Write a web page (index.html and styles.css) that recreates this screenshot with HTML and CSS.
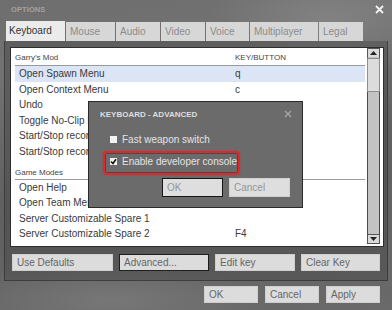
FILE: index.html
```html
<!DOCTYPE html>
<html>
<head>
	<meta http-equiv="Content-Type" content="text/html;charset=UTF-8">
	<title>Options</title>
	<link rel="stylesheet" href="styles.css">
</head>
<body>
	<div class="options">
		<div class="titlebar">
			<span class="title">OPTIONS</span>
			<svg class="close" width="9" height="9" viewBox="0 0 9 9"><path d="M1 1L8 8M8 1L1 8" stroke="#f2f2f2" stroke-width="1.8"/></svg>
		</div>
		<div class="tabs">
			<div class="tab active w-keyboard">Keyboard</div>
			<div class="tab w-mouse">Mouse</div>
			<div class="tab w-audio">Audio</div>
			<div class="tab w-video">Video</div>
			<div class="tab w-voice">Voice</div>
			<div class="tab w-multi">Multiplayer</div>
			<div class="tab w-legal">Legal</div>
		</div>
		<div class="sheet">
			<div class="listbox">
				<div class="list">
					<div class="section first"><span class="col-action">Garry's Mod</span><span class="col-key">KEY/BUTTON</span></div>
					<div class="row selected"><span class="col-action">Open Spawn Menu</span><span class="col-key">q</span></div>
					<div class="row"><span class="col-action">Open Context Menu</span><span class="col-key">c</span></div>
					<div class="row"><span class="col-action">Undo</span><span class="col-key"></span></div>
					<div class="row"><span class="col-action">Toggle No-Clip Mode</span><span class="col-key"></span></div>
					<div class="row"><span class="col-action">Start/Stop recording</span><span class="col-key"></span></div>
					<div class="row"><span class="col-action">Start/Stop recording</span><span class="col-key"></span></div>
					<div class="section"><span class="col-action">Game Modes</span><span class="col-key"></span></div>
					<div class="row"><span class="col-action">Open Help</span><span class="col-key"></span></div>
					<div class="row"><span class="col-action">Open Team Menu</span><span class="col-key"></span></div>
					<div class="row"><span class="col-action">Server Customizable Spare 1</span><span class="col-key"></span></div>
					<div class="row"><span class="col-action">Server Customizable Spare 2</span><span class="col-key">F4</span></div>
				</div>
				<div class="scrollbar">
					<div class="sb-btn"><svg width="7" height="4" viewBox="0 0 7 4"><polygon points="0,4 3.5,0 7,4" fill="#222"/></svg></div>
					<div class="sb-track"><div class="sb-thumb"></div></div>
					<div class="sb-btn"><svg width="7" height="4" viewBox="0 0 7 4"><polygon points="0,0 7,0 3.5,4" fill="#222"/></svg></div>
				</div>
			</div>
			<div class="actions">
				<div class="btn w-defaults">Use Defaults</div>
				<div class="btn focused w-advanced">Advanced...</div>
				<div class="btn w-edit">Edit key</div>
				<div class="btn w-clear">Clear Key</div>
			</div>
		</div>
		<div class="footer">
			<div class="btn w-small">OK</div>
			<div class="btn w-small">Cancel</div>
			<div class="btn w-small">Apply</div>
		</div>

		<!-- modal on top of the list -->
		<div class="dialog">
			<div class="dlg-title">
				<span>KEYBOARD - ADVANCED</span>
				<svg width="8" height="8" viewBox="0 0 8 8"><path d="M1 1L7 7M7 1L1 7" stroke="#a8a8a8" stroke-width="1.3"/></svg>
			</div>
			<div class="check"><span class="box"></span>Fast weapon switch</div>
			<div class="check"><span class="box"><svg width="7" height="7" viewBox="0 0 7 7"><polyline points="1,3.5 3,5.5 6,1.2" fill="none" stroke="#111" stroke-width="1.6"/></svg></span>Enable developer console</div>
			<div class="dlg-buttons">
				<div class="dlg-btn focused w-dlg">OK</div>
				<div class="dlg-btn w-dlg">Cancel</div>
			</div>
			<div class="marker"></div>
		</div>
	</div>
</body>
</html>
```

FILE: styles.css
```css
*{ margin: 0; padding: 0; box-sizing: border-box; }
body{ width: 392px; height: 310px; overflow: hidden; font-family: "Liberation Sans", Arial, sans-serif; }

.options{ position: relative; width: 392px; height: 310px;
	background:
		radial-gradient(ellipse 120px 60px at 330px 20px, rgba(150,150,150,.45), rgba(150,150,150,0)),
		radial-gradient(ellipse 160px 40px at 110px 300px, rgba(150,150,150,.35), rgba(150,150,150,0)),
		linear-gradient(170deg, #6e6e6e 0%, #727272 20%, #5f5f5f 55%, #6a6a6a 100%); }

.titlebar{ height: 21px; display: flex; align-items: center; justify-content: space-between; padding: 0 8px 2px 11px; }
.title{ font-size: 7.5px; font-weight: bold; color: #a2a2a2; letter-spacing: .1px; }

.tabs{ display: flex; gap: 1px; padding-left: 6px; height: 20px; align-items: flex-end; }
.tab{ height: 19px; background: #d7d7d7; color: #8c8c8c; font-size: 10px; line-height: 19px; padding-left: 4px; }
.tab.active{ height: 20px; background: #ebebeb; color: #333; padding-left: 3px; }
.w-keyboard{ width: 59px; } .w-mouse{ width: 49px; } .w-audio{ width: 44px; } .w-video{ width: 44px; }
.w-voice{ width: 43px; } .w-multi{ width: 68px; } .w-legal{ width: 44px; }

.sheet{ margin: 0 4px; height: 240px; border: 1px solid rgba(38,38,38,.55); border-top: none;
	background: rgba(72,72,72,.45); padding: 6px 3px 0 5px; }

.listbox{ display: flex; height: 200px; width: 374px; background: #fff; border: 1px solid #2e2e2e; }
.list{ width: 350px; margin-left: 4px; }
.section, .row{ display: grid; grid-template-columns: 220px 1fr; color: #3a3a3a; }
.section{ font-size: 8px; line-height: 12px; padding-top: 7px; border-bottom: 1px solid #9a9a9a; color: #444; }
.section.first{ padding-top: 4px; padding-bottom: 1px; }
.row{ font-size: 10px; height: 15.6px; line-height: 15.6px; }
.row .col-action{ padding-left: 4px; }
.row.selected{ background: #dce5f6; }

.scrollbar{ width: 13px; margin: 0 3px 2px 2px; display: flex; flex-direction: column; border: 1px solid #4a4a4a; }
.sb-btn{ height: 10px; background: #dadada; display: flex; align-items: center; justify-content: center; border: 1px solid #555; margin: -1px; }
.sb-track{ flex: 1; background: #c3c3c3; padding-top: 1px; }
.sb-thumb{ height: 34px; background: #dcdcdc; border: 1px solid #8e8e8e; margin: 0 -1px; }

.actions{ display: flex; gap: 6px; margin-top: 7px; padding-left: 2px; }
.btn{ height: 17px; background: #dcdcdc; color: #666; font-size: 10px; line-height: 15px; padding-left: 4px; border: 1px solid #cfcfcf; }
.btn.focused{ border-color: #1e1e1e; }
.w-defaults{ width: 101px; } .w-advanced{ width: 90px; } .w-edit{ width: 80px; } .w-clear{ width: 79px; }

.footer{ display: flex; justify-content: flex-end; gap: 7px; padding: 5px 12px 0 0; }
.w-small{ width: 54px; }

.dialog{ position: absolute; left: 88px; top: 101px; width: 215px; height: 107px;
	background: #6b6b6b; border: 1px solid #2a2a2a; padding: 7px 10px 0 21px; color: #e4e4e4; }
.dlg-title{ display: flex; justify-content: space-between; align-items: center; height: 10px; margin-left: -10px;
	font-size: 8px; font-weight: bold; color: #dedede; }
.check{ display: flex; align-items: center; font-size: 10px; height: 12px; margin-top: 14px; gap: 5px; }
.check + .check{ margin-top: 10px; }
.box{ width: 7px; height: 7px; background: #f2f2f2; display: flex; align-items: center; justify-content: center; }
.box svg{ margin: -1px; }
.dlg-buttons{ display: flex; gap: 6px; margin: 11px 0 0 52px; }
.dlg-btn{ height: 19px; background: #dedede; color: #959595; font-size: 10px; line-height: 17px; padding-left: 4px; border: 1px solid #d2d2d2; }
.dlg-btn.focused{ border-color: #161616; }
.w-dlg{ width: 61px; }
.marker{ position: absolute; left: 14px; top: 49px; width: 137px; height: 24px;
	border: 2.5px solid #e0282c; border-radius: 4px; box-shadow: 0 0 2px rgba(230,40,40,.6), inset 0 0 0 1px rgba(40,40,40,.5); }
```
